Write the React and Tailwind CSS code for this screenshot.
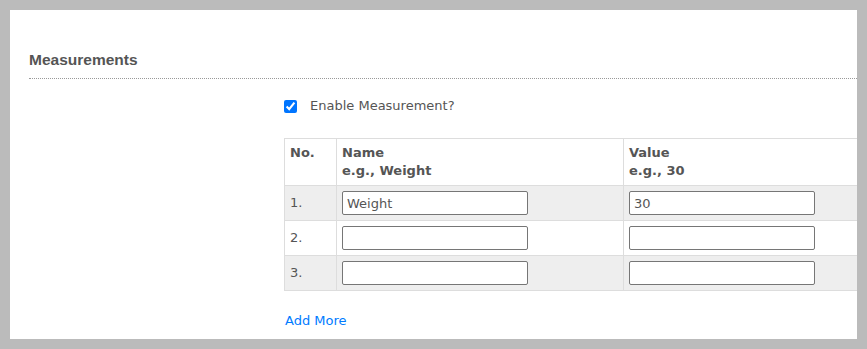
import React from "react";

const rows = [
  { n: "1.", name: "Weight", value: "30", bg: "bg-[#eeeeee]" },
  { n: "2.", name: "", value: "", bg: "bg-white" },
  { n: "3.", name: "", value: "", bg: "bg-[#eeeeee]" },
];

const font = "font-['DejaVu_Sans',Verdana,sans-serif]";

export default function App() {
  return (
    <div className="w-[867px] h-[349px] bg-[#bbbbbb] p-[10px]">
      <div className="w-[847px] h-[329px] bg-white overflow-hidden pt-[41px] pl-[19px]">
        <div className="font-['Liberation_Sans',Arial,sans-serif] font-bold text-[15.5px] leading-[18px] text-[#555555]">
          Measurements
        </div>
        <div className="mt-[9px] border-t border-dotted border-[#999999]" />
        <div className={`flex ${font} text-[13px] leading-[18px] text-[#555555]`}>
          <div className="w-[255px] shrink-0" />
          <div className="flex flex-col">
            <label className="mt-[18px] flex items-center h-[18px]">
              <input
                type="checkbox"
                defaultChecked
                className="m-0 w-[13px] h-[13px] accent-[#0075ff]"
              />
              <span className="ml-[13px]">Enable Measurement?</span>
            </label>
            <div className="mt-[23px] w-[626px] border-r border-b border-[#dddddd]">
              <div className="grid grid-cols-[52px_287px_287px] font-bold bg-white">
                <div className="border-l border-t border-[#dddddd] p-[5px]">No.</div>
                <div className="border-l border-t border-[#dddddd] p-[5px]">
                  <div>Name</div>
                  <div>e.g., Weight</div>
                </div>
                <div className="border-l border-t border-[#dddddd] p-[5px]">
                  <div>Value</div>
                  <div>e.g., 30</div>
                </div>
              </div>
              {rows.map((r) => (
                <div key={r.n} className={`grid grid-cols-[52px_287px_287px] ${r.bg}`}>
                  <div className="border-l border-t border-[#dddddd] px-[5px] h-[35px] flex items-center">
                    {r.n}
                  </div>
                  <div className="border-l border-t border-[#dddddd] px-[5px] h-[35px] flex items-center">
                    <input
                      type="text"
                      defaultValue={r.name}
                      className={`w-[186px] h-[24px] bg-white border border-[#767676] rounded-[2px] px-[4px] ${font} text-[13px] text-[#555555] outline-none`}
                    />
                  </div>
                  <div className="border-l border-t border-[#dddddd] px-[5px] h-[35px] flex items-center">
                    <input
                      type="text"
                      defaultValue={r.value}
                      className={`w-[186px] h-[24px] bg-white border border-[#767676] rounded-[2px] px-[4px] ${font} text-[13px] text-[#555555] outline-none`}
                    />
                  </div>
                </div>
              ))}
            </div>
            <div className="mt-[21px]">
              <a href="#" className="text-[#007bff] ml-[1px]">Add More</a>
            </div>
          </div>
        </div>
      </div>
    </div>
  );
}
